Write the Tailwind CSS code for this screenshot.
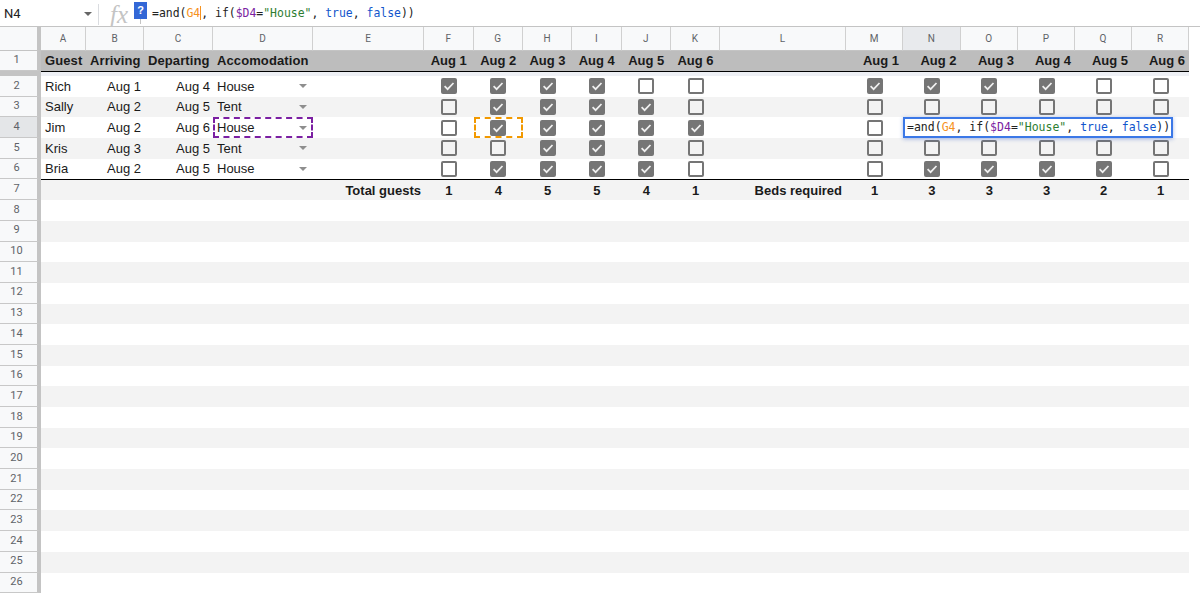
<!DOCTYPE html>
<html lang="en">
  <head>
    <meta charset="UTF-8" />
    <title>Guest sheet</title>
    <script src="https://cdn.jsdelivr.net/npm/@tailwindcss/browser@4"></script>
  </head>
  <body class="bg-white h-[594px] overflow-hidden font-['Liberation_Sans',sans-serif] text-[13px] text-[#1a1a1a]">

    <!-- Formula bar -->
    <div class="flex items-center h-[27px] pt-[2px] border-b border-[#c4c4c4] bg-white">
      <div class="w-[84px] pl-1 text-[13px] font-['Roboto',sans-serif] text-[#222]">N4</div>
      <div class="w-0 h-0 border-x-4 border-x-transparent border-t-[4px] border-t-[#666]"></div>
      <div class="w-px h-[21px] ml-[6px] bg-[#dadce0]"></div>
      <div class="w-[35px] pl-[11px] font-['Liberation_Serif',serif] italic text-[25px] leading-none text-[#c4c4c4]">fx</div>
      <div class="relative self-start flex items-center justify-center w-[13px] h-[17px] bg-[#3367d6] text-white text-[11px] font-bold">?<span class="absolute left-[6px] top-[17px] w-px h-[5px] bg-[#c4c4c4]"></span></div>
      <div class="ml-[5px] font-['DejaVu_Sans_Mono',monospace] text-[11.45px] whitespace-pre text-[#222]">=and(<span class="text-[#f6921e] border-r border-[#f6921e]">G4</span>, if(<span class="text-[#7b1fa2]">$D4</span>=<span class="text-[#2e7d32]">"House"</span>, <span class="text-[#1155cc]">true</span>, <span class="text-[#1155cc]">false</span>))</div>
    </div>

    <!-- Sheet grid, filled in below -->
    <div id="sheet" class="grid w-[1189px] grid-cols-[41px_45px_58px_69px_100px_111px_49.5px_49.5px_49px_49.5px_49.5px_49px_126px_57px_57.5px_57.5px_57px_57px_57px] grid-rows-[24px_20px_5px_repeat(25,20.7px)]"></div>

    <script>
      const letters = 'ABCDEFGHIJKLMNOPQR'.split('');
      const days = ['Aug 1', 'Aug 2', 'Aug 3', 'Aug 4', 'Aug 5', 'Aug 6'];
      const guests = [
        ['Rich', 'Aug 1', 'Aug 4', 'House', '111100', '111100'],
        ['Sally', 'Aug 2', 'Aug 5', 'Tent', '011110', '000000'],
        ['Jim', 'Aug 2', 'Aug 6', 'House', '011111', '0'],
        ['Kris', 'Aug 3', 'Aug 5', 'Tent', '001110', '000000'],
        ['Bria', 'Aug 2', 'Aug 5', 'House', '011110', '011110'],
      ];
      const formula = `=and(<span class="text-[#f6921e]">G4</span>, if(<span class="text-[#7b1fa2]">$D4</span>=<span class="text-[#2e7d32]">"House"</span>, <span class="text-[#1155cc]">true</span>, <span class="text-[#1155cc]">false</span>))`;
      const tick = '<svg class="w-3 h-3" viewBox="0 0 12 12" fill="none" stroke="#f0f0f0" stroke-width="1.7"><path d="M1.6 6.2l3 3 5.9-6.2" /></svg>';

      function rowHead(n, selected) {
        const bg = selected ? 'bg-[#e4e6e8]' : 'bg-[#f8f9fa]';
        return `<div class="flex items-center justify-center pr-1 ${bg} border-r-4 border-r-[#c4c4c4] border-b border-b-[#c8c8c8] font-['Roboto',sans-serif] text-[11px] text-[#5f6368]">${n}</div>`;
      }

      function checkbox(on) {
        const look = on ? 'bg-[#757575]' : 'bg-transparent';
        return `<div class="flex items-center justify-center"><span class="flex items-center justify-center w-4 h-4 rounded-[2px] border-2 border-[#757575] ${look}">${on ? tick : ''}</span></div>`;
      }

      let html = '';

      // column letters
      html += '<div class="bg-[#f8f9fa] border-r-4 border-r-[#c4c4c4] border-b border-b-[#c4c4c4]"></div>';
      letters.forEach((l) => {
        const bg = l === 'N' ? 'bg-[#e8eaed]' : 'bg-[#f8f9fa]';
        html += `<div class="flex items-center justify-center ${bg} border-r border-[#d0d0d0] border-b border-b-[#c4c4c4] font-['Roboto',sans-serif] text-[10px] text-[#5f6368]">${l}</div>`;
      });

      // frozen header row
      html += rowHead(1, false);
      ['Guest', 'Arriving', 'Departing', 'Accomodation'].forEach((t) => {
        html += `<div class="flex items-center pl-1 bg-[#bdbdbd] font-bold whitespace-nowrap tracking-[0.1px]">${t}</div>`;
      });
      html += '<div class="bg-[#bdbdbd]"></div>';
      days.forEach((d) => { html += `<div class="flex items-center justify-center bg-[#bdbdbd] font-bold whitespace-nowrap">${d}</div>`; });
      html += '<div class="bg-[#bdbdbd]"></div>';
      days.forEach((d) => { html += `<div class="flex items-center justify-end pr-1 bg-[#bdbdbd] font-bold whitespace-nowrap">${d}</div>`; });

      // freeze line
      html += '<div class="bg-[#c4c4c4]"></div>';
      html += '<div class="col-span-18 bg-[#eef0f5] border-t-[1.5px] border-black"></div>';

      // guest rows
      guests.forEach((g, i) => {
        const n = i + 2;
        const bg = n % 2 ? 'bg-[#f3f3f3]' : 'bg-white';
        html += rowHead(n, n === 4);
        html += `<div class="flex items-center pl-1 ${bg}">${g[0]}</div>`;
        html += `<div class="flex items-center justify-end pr-[3px] ${bg}">${g[1]}</div>`;
        html += `<div class="flex items-center justify-end pr-[3px] ${bg}">${g[2]}</div>`;
        html += `<div class="relative flex items-center justify-between pl-1 pr-[6px] ${bg}">${g[3]}<span class="w-0 h-0 border-x-4 border-x-transparent border-t-[4px] border-t-[#8e8e8e]"></span>${n === 4 ? '<div class="absolute inset-0 border-2 border-dashed border-[#7b1fa2]"></div>' : ''}</div>`;
        html += `<div class="${bg}"></div>`;
        g[4].split('').forEach((c, k) => {
          const box = checkbox(c === '1');
          const marked = n === 4 && k === 1;
          html += `<div class="relative grid ${bg}">${box}${marked ? '<div class="absolute inset-0 border-2 border-dashed border-[#f29900]"></div>' : ''}</div>`;
        });
        html += `<div class="${bg}"></div>`;
        if (n === 4) {
          html += `<div class="grid ${bg}">${checkbox(false)}</div>`;
          html += `<div class="relative col-span-5 ${bg}"><div class="absolute z-10 left-0 top-0 w-[270px] h-[20.7px] flex items-center pl-[2px] bg-white border-2 border-[#3b78e7] shadow-[0_1px_4px_rgba(60,100,200,0.45)] font-['DejaVu_Sans_Mono',monospace] text-[11.5px] whitespace-pre text-[#222]">${formula}</div></div>`;
        } else {
          g[5].split('').forEach((c) => { html += `<div class="grid ${bg}">${checkbox(c === '1')}</div>`; });
        }
      });

      // totals
      const total = "flex items-center justify-center border-t border-black bg-[#f3f3f3] font-bold";
      html += rowHead(7, false);
      html += `<div class="col-span-5 flex items-center justify-end pr-[3px] border-t border-black bg-[#f3f3f3] font-bold">Total guests</div>`;
      [1, 4, 5, 5, 4, 1].forEach((v) => { html += `<div class="${total}">${v}</div>`; });
      html += `<div class="flex items-center justify-end pr-[4px] border-t border-black bg-[#f3f3f3] font-bold">Beds required</div>`;
      [1, 3, 3, 3, 2, 1].forEach((v) => { html += `<div class="${total}">${v}</div>`; });

      // empty rows
      for (let n = 8; n <= 26; n++) {
        html += rowHead(n, false);
        html += `<div class="col-span-18 ${n % 2 ? 'bg-[#f3f3f3]' : 'bg-white'}"></div>`;
      }

      document.getElementById('sheet').innerHTML = html;
    </script>
  </body>
</html>
